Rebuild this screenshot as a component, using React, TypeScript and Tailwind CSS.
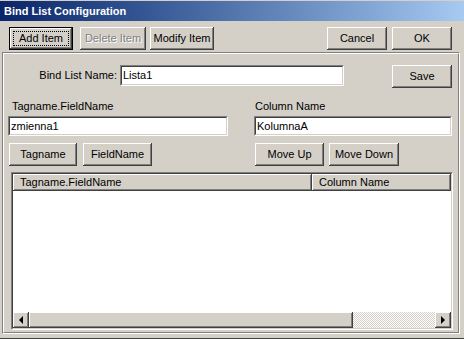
import React from "react";

const raised =
  "bg-[#d4d0c8] shadow-[inset_-1px_-1px_#404040,inset_1px_1px_#ffffff,inset_-2px_-2px_#808080,inset_2px_2px_#d4d0c8]";
const raisedDefault =
  "bg-[#d4d0c8] shadow-[inset_0_0_0_1px_#000000,inset_-2px_-2px_#404040,inset_2px_2px_#ffffff,inset_-3px_-3px_#808080]";

function Btn({
  className = "",
  children,
  disabled = false,
  isDefault = false,
}: {
  className?: string;
  children: React.ReactNode;
  disabled?: boolean;
  isDefault?: boolean;
}) {
  return (
    <div
      className={`relative flex shrink-0 items-center justify-center h-[23px] ${
        isDefault ? raisedDefault : raised
      } ${className}`}
    >
      {isDefault && (
        <span className="absolute left-[4px] right-[4px] top-[4px] bottom-[4px] border border-dotted border-black" />
      )}
      <span
        className={
          disabled ? "text-[#808080] [text-shadow:1px_1px_0_#ffffff]" : "text-black"
        }
      >
        {children}
      </span>
    </div>
  );
}

function Input({ className = "", value }: { className?: string; value: string }) {
  return (
    <div
      className={`shrink-0 border border-t-[#808080] border-l-[#808080] border-r-white border-b-white ${className}`}
    >
      <div className="h-full flex items-center pl-[1px] bg-white border border-t-[#404040] border-l-[#404040] border-r-[#d4d0c8] border-b-[#d4d0c8]">
        {value}
      </div>
    </div>
  );
}

const headerCell =
  "bg-[#d4d0c8] shadow-[inset_-1px_-1px_#404040,inset_1px_1px_#ffffff,inset_-2px_-2px_#808080]";

export default function App() {
  return (
    <div className="w-[464px] h-[339px] bg-[#d4d0c8] flex flex-col overflow-hidden font-['Liberation_Sans',Arial,sans-serif] text-[11px] text-black border-b border-[#404040]">
      <div className="h-[21px] shrink-0 border-t border-[#d4d0c8] bg-gradient-to-r from-[#0a246a] to-[#a6caf0] text-white font-bold text-[11px] flex items-center pl-[4px]">
        Bind List Configuration
      </div>

      <div className="flex mt-[6px] h-[23px] shrink-0">
        <Btn className="ml-[9px] w-[64px]" isDefault>
          Add Item
        </Btn>
        <Btn className="ml-[7px] w-[66px]" disabled>
          Delete Item
        </Btn>
        <Btn className="ml-[4px] w-[64px]">Modify Item</Btn>
        <Btn className="ml-[113px] w-[60px]">Cancel</Btn>
        <Btn className="ml-[5px] w-[60px]">OK</Btn>
      </div>

      <div className="ml-[2px] mt-[2px] w-[458px] h-[282px] shrink-0 border border-t-[#808080] border-l-[#808080] border-r-white border-b-white">
        <div className="h-full flex flex-col border border-t-white border-l-white border-r-[#808080] border-b-[#808080]">
          <div className="flex items-start mt-[11px]">
            <div className="w-[113px] h-[21px] flex items-center justify-end shrink-0">
              Bind List Name:
            </div>
            <Input className="ml-[3px] w-[224px] h-[21px]" value="Lista1" />
            <Btn className="ml-[48px] w-[60px]">Save</Btn>
          </div>

          <div className="flex mt-[12px]">
            <div className="ml-[4px] w-[220px] flex flex-col shrink-0">
              <div className="h-[13px] leading-[13px] pl-[4px]">Tagname.FieldName</div>
              <Input className="mt-[3px] h-[20px]" value="zmienna1" />
            </div>
            <div className="ml-[26px] w-[198px] flex flex-col shrink-0">
              <div className="h-[13px] leading-[13px] pl-[1px]">Column Name</div>
              <Input className="mt-[3px] h-[20px]" value="KolumnaA" />
            </div>
          </div>

          <div className="flex mt-[7px]">
            <Btn className="ml-[5px] w-[68px]">Tagname</Btn>
            <Btn className="ml-[6px] w-[69px]">FieldName</Btn>
            <Btn className="ml-[103px] w-[69px]">Move Up</Btn>
            <Btn className="ml-[5px] w-[70px]">Move Down</Btn>
          </div>

          <div className="ml-[7px] mt-[6px] w-[442px] h-[158px] shrink-0 border border-t-[#808080] border-l-[#808080] border-r-white border-b-white">
            <div className="h-full flex flex-col bg-white border border-t-[#404040] border-l-[#404040] border-r-[#d4d0c8] border-b-[#d4d0c8]">
              <div className="h-[17px] flex shrink-0">
                <div className={`w-[299px] shrink-0 flex items-center pl-[7px] ${headerCell}`}>
                  Tagname.FieldName
                </div>
                <div className={`flex-1 flex items-center pl-[7px] ${headerCell}`}>
                  Column Name
                </div>
              </div>
              <div className="flex-1" />
              <div className="h-[16px] flex shrink-0">
                <div className={`w-[16px] shrink-0 flex items-center justify-center ${raised}`}>
                  <span className="w-0 h-0 border-y-[4px] border-y-transparent border-r-[4px] border-r-black" />
                </div>
                <div className={`w-[324px] shrink-0 ${raised}`} />
                <div className="flex-1 bg-[repeating-conic-gradient(#d4d0c8_0%_25%,#ffffff_0%_50%)] [background-size:2px_2px]" />
                <div className={`w-[16px] shrink-0 flex items-center justify-center ${raised}`}>
                  <span className="w-0 h-0 border-y-[4px] border-y-transparent border-l-[4px] border-l-black" />
                </div>
              </div>
            </div>
          </div>
        </div>
      </div>
    </div>
  );
}
